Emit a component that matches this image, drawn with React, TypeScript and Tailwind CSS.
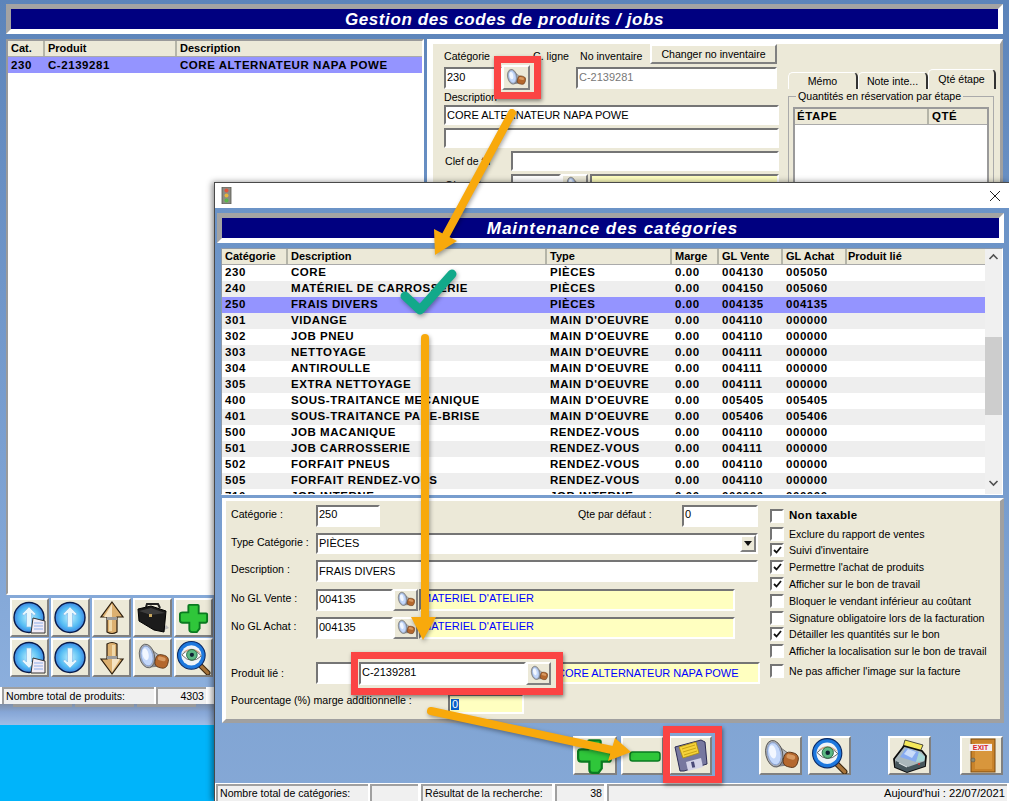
import type { ReactNode } from "react";

const font = "font-['Liberation_Sans',Arial,sans-serif]";
const sunken = "border-2 border-t-[#757575] border-l-[#757575] border-b-white border-r-white";
const raised = "border-2 border-t-white border-l-white border-b-[#808080] border-r-[#808080] bg-[#ece9d8]";
const gridText = "font-bold tracking-[0.55px] text-[11.5px] text-black";
const headText = "font-bold text-[11px] text-black leading-none";

const categories = [
  ["230", "CORE", "PIÈCES", "0.00", "004130", "005050"],
  ["240", "MATÉRIEL DE CARROSSERIE", "PIÈCES", "0.00", "004150", "005060"],
  ["250", "FRAIS DIVERS", "PIÈCES", "0.00", "004135", "004135"],
  ["301", "VIDANGE", "MAIN D'OEUVRE", "0.00", "004110", "000000"],
  ["302", "JOB PNEU", "MAIN D'OEUVRE", "0.00", "004110", "000000"],
  ["303", "NETTOYAGE", "MAIN D'OEUVRE", "0.00", "004111", "000000"],
  ["304", "ANTIROULLE", "MAIN D'OEUVRE", "0.00", "004111", "000000"],
  ["305", "EXTRA NETTOYAGE", "MAIN D'OEUVRE", "0.00", "004111", "000000"],
  ["400", "SOUS-TRAITANCE MECANIQUE", "MAIN D'OEUVRE", "0.00", "005405", "005405"],
  ["401", "SOUS-TRAITANCE PARE-BRISE", "MAIN D'OEUVRE", "0.00", "005406", "005406"],
  ["500", "JOB MACANIQUE", "RENDEZ-VOUS", "0.00", "004110", "000000"],
  ["501", "JOB CARROSSERIE", "RENDEZ-VOUS", "0.00", "004111", "000000"],
  ["502", "FORFAIT PNEUS", "RENDEZ-VOUS", "0.00", "004110", "000000"],
  ["505", "FORFAIT RENDEZ-VOUS", "RENDEZ-VOUS", "0.00", "004110", "000000"],
  ["710", "JOB INTERNE", "JOB INTERNE", "0.00", "000000", "000000"],
];

const options = [
  { label: "Non taxable", checked: false, bold: true, gap: "mt-0" },
  { label: "Exclure du rapport de ventes", checked: false, gap: "mt-[4px]" },
  { label: "Suivi d'inventaire", checked: true, gap: "mt-[2px]" },
  { label: "Permettre l'achat de produits", checked: true, gap: "mt-[3px]" },
  { label: "Afficher sur le bon de travail", checked: true, gap: "mt-[3px]" },
  { label: "Bloquer le vendant inférieur au coûtant", checked: false, gap: "mt-[3px]" },
  { label: "Signature obligatoire lors de la facturation", checked: false, gap: "mt-[3px]" },
  { label: "Détailler les quantités sur le bon", checked: true, gap: "mt-[2px]" },
  { label: "Afficher la localisation sur le bon de travail", checked: false, gap: "mt-[3px]" },
  { label: "Ne pas afficher l'image sur la facture", checked: false, gap: "mt-[6px]" },
];

function SpyIcon({ size = 24 }: { size?: number }) {
  return (
    <svg width={size} height={size} viewBox="0 0 32 32">
      <path d="M12 6 L23 14 L23 24 L13 25 Z" fill="#b4b8c0" stroke="#666" strokeWidth="0.8" />
      <path d="M14 19 L23 17 L23 24 L13 25 Z" fill="#868a94" />
      <g transform="rotate(14 25 20)">
        <rect x="18" y="13" width="13" height="13" rx="5" fill="#b4682e" stroke="#5a3416" strokeWidth="0.8" />
        <rect x="20" y="15" width="8" height="4" rx="2" fill="#d89a62" />
      </g>
      <g transform="rotate(-12 10 14)">
        <ellipse cx="10" cy="14" rx="7.5" ry="12" fill="#a8acb4" stroke="#555" strokeWidth="0.8" />
        <ellipse cx="10" cy="14" rx="5.8" ry="10" fill="#c4d8fa" stroke="#7a98d0" strokeWidth="0.6" />
        <ellipse cx="9" cy="12" rx="3" ry="6" fill="#f2f7ff" />
      </g>
    </svg>
  );
}

function EyeIcon({ size = 36 }: { size?: number }) {
  return (
    <svg width={size} height={size} viewBox="0 0 32 32">
      <path d="M21 22 L29 30" stroke="#3d2a12" strokeWidth="5" strokeLinecap="round" />
      <path d="M21 22 L29 30" stroke="#a8743a" strokeWidth="3" strokeLinecap="round" />
      <circle cx="13.5" cy="13.5" r="13" fill="#1d78de" stroke="#0b2a66" strokeWidth="1" />
      <circle cx="13.5" cy="13.5" r="9.5" fill="#eef3f8" />
      <path d="M4.5 13 Q13.5 3 23 14 Q13.5 23 4.5 13 Z" fill="#fff" stroke="#555" strokeWidth="0.8" />
      <path d="M5 11 Q14 3 23 12 Q14 7 5 11 Z" fill="#d6a98b" />
      <circle cx="14" cy="13" r="5" fill="#5cb884" stroke="#1d5f3a" strokeWidth="0.8" />
      <circle cx="14" cy="13" r="2" fill="#123" />
    </svg>
  );
}

function PlusIcon({ size = 36 }: { size?: number }) {
  return (
    <svg width={size} height={size} viewBox="0 0 32 32">
      <path d="M11 2 h9 q1 0 1 1 v8 h8 q1 0 1 1 v7 q0 2 -2 2 h-6 v6 l-3 4 h-5 q-3 0 -3 -3 v-7 h-7 q-3 0 -3 -3 v-6 q0 -2 3 -2 h6 v-7 q0 -1 1 -1 z" fill="#2fc63a" stroke="#0a7a20" strokeWidth="2" />
    </svg>
  );
}

function MinusIcon() {
  return (
    <svg width="36" height="36" viewBox="0 0 36 36">
      <rect x="5" y="14" width="30" height="9" rx="2.5" fill="#2fc63a" stroke="#0a7a20" strokeWidth="1.5" />
    </svg>
  );
}

function CaseIcon() {
  return (
    <svg width="34" height="34" viewBox="0 0 34 34">
      <path d="M26 30 L33 27 L30 24 Z" fill="#bbb" />
      <path d="M10 6 l1 -3 h11 l2 4" fill="none" stroke="#222" strokeWidth="2" />
      <path d="M2 8 L15 5 L30 10 L28 31 L18 29 L3 20 Z" fill="#1b1b1b" stroke="#000" />
      <path d="M3 10 L15 7 L29 12 L15 14 Z" fill="#3c3c3c" />
      <rect x="13" y="13" width="3" height="3" fill="#c8a860" />
    </svg>
  );
}

function RoundArrowIcon({ down, paper }: { down?: boolean; paper?: boolean }) {
  return (
    <svg width="34" height="34" viewBox="0 0 34 34">
      <defs>
        <radialGradient id="roundBlue" cx="50%" cy="50%" r="60%">
          <stop offset="0%" stopColor="#bff0fc" />
          <stop offset="55%" stopColor="#55bdf4" />
          <stop offset="100%" stopColor="#3066d8" />
        </radialGradient>
      </defs>
      <ellipse cx="16" cy="16.5" rx="15" ry="15" fill="url(#roundBlue)" stroke="#081a4a" strokeWidth="1.4" />
      <g transform={down ? "rotate(180 16 16.5)" : undefined}>
        <path d="M16 6 L23 13 L21 14.5 L18.5 12 L18.5 26 L13.5 26 L13.5 12 L11 14.5 L9 13 Z" fill="#e8f7fd" stroke="#7db4e8" strokeWidth="0.6" />
      </g>
      {paper && (
        <g>
          <path d="M20 17 L32 20 L32 32 L18 32 Z" fill="#f2ecf6" stroke="#333" strokeWidth="1" />
          <path d="M21 22 h9 M21 25 h9 M21 28 h9" stroke="#8db0e8" strokeWidth="1" />
        </g>
      )}
    </svg>
  );
}

function TanArrowIcon({ down }: { down?: boolean }) {
  return (
    <svg width="30" height="34" viewBox="0 0 30 34">
      <g transform={down ? "rotate(180 15 17)" : undefined}>
        <path d="M15 1 L26 16 L20 16 L20 31 Q15 34 10 31 L10 16 L4 16 Z" fill="#dcb070" stroke="#2a1c0c" strokeWidth="1.2" />
        <path d="M15 3 L15 16 L7 16 Z" fill="#f5e3c2" />
        <rect x="10" y="16" width="10" height="3" fill="#9a9a9a" />
        <rect x="12" y="19" width="3" height="11" fill="#f0d8a8" />
      </g>
    </svg>
  );
}

function FloppyIcon() {
  return (
    <svg width="36" height="36" viewBox="0 0 36 36">
      <path d="M2 9 L28 2 L32 4 L34 26 L11 33 L7 33 Z" fill="#77789f" stroke="#2c2c55" strokeWidth="1" />
      <path d="M6 9 L23 4 L26 15 L10 20 Z" fill="#f5d23a" stroke="#a88a10" strokeWidth="0.8" />
      <path d="M9 11 L22 7 M10 14 L23 10 M11 17 L24 13" stroke="#c9a414" strokeWidth="1" />
      <path d="M13 24 L28 20 L30 29 L15 33 Z" fill="#d4d4e8" />
      <rect x="18" y="24" width="3" height="6" fill="#4a4a78" transform="rotate(-12 18 24)" />
    </svg>
  );
}

function PrinterIcon() {
  return (
    <svg width="36" height="34" viewBox="0 0 36 34">
      <path d="M13 1 L31 6 L28 13 L11 8 Z" fill="#f5e85a" stroke="#222" strokeWidth="0.8" />
      <path d="M2 20 L12 7 L30 12 L34 17 L33 27 L15 33 L3 28 Z" fill="#aab8bc" stroke="#0c0c0c" strokeWidth="1.8" />
      <path d="M8 18 L14 9 L27 13 L24 23 Z" fill="#86aaf0" />
      <path d="M12 15 L16 10 L24 13 L20 19 Z" fill="#c9dcfa" />
      <path d="M24 23 L27 13 L33 18 L32 22 Z" fill="#a4d6d6" />
      <path d="M4 22 L16 28 L33 22 L33 27 L15 33 L3 28 Z" fill="#46565c" />
      <path d="M7 24 L15 28" stroke="#dfe6e8" strokeWidth="1.2" />
      <circle cx="27" cy="25" r="1" fill="#e03030" />
    </svg>
  );
}

function ExitIcon() {
  return (
    <svg width="30" height="36" viewBox="0 0 30 36">
      <rect x="4" y="1" width="24" height="33" fill="#c9832a" stroke="#7a4a10" strokeWidth="1" />
      <rect x="8" y="5" width="17" height="26" fill="#d8963c" />
      <rect x="2" y="6" width="23" height="7" fill="#f3eef0" />
      <text x="13.5" y="12" textAnchor="middle" fontSize="7" fontWeight="700" fill="#d8222a" fontFamily="Liberation Sans">EXIT</text>
      <circle cx="6" cy="22" r="2" fill="#8a8a70" stroke="#555" strokeWidth="0.6" />
    </svg>
  );
}

function TrafficLight() {
  return (
    <svg width="11" height="17" viewBox="0 0 11 17">
      <rect x="1" y="0" width="9" height="17" fill="#8c8c84" stroke="#55554f" strokeWidth="0.8" />
      <circle cx="5.5" cy="3.5" r="2" fill="#e2543c" />
      <circle cx="5.5" cy="8.5" r="2" fill="#e8b43c" />
      <circle cx="5.5" cy="13.5" r="2" fill="#58b848" />
    </svg>
  );
}

function Field({ w, h = "h-[22px]", tone = "bg-white", text = "text-black", align = "", children }: { w: string; h?: string; tone?: string; text?: string; align?: string; children?: ReactNode }) {
  return (
    <div className={`${w} ${h} ${tone} ${text} ${sunken} shrink-0 overflow-hidden whitespace-nowrap flex items-center pl-[1px] text-[11px] leading-none ${align}`}>
      {children}
    </div>
  );
}

function SearchButton({ w = "w-[25px]", h = "h-[22px]", size = 18, className = "" }: { w?: string; h?: string; size?: number; className?: string }) {
  return (
    <button className={`${w} ${h} ${raised} shrink-0 flex items-center justify-center ${className}`}>
      <SpyIcon size={size} />
    </button>
  );
}

function ToolButton({ children, w = "w-[41px]", h = "h-[39px]", className = "" }: { children: ReactNode; w?: string; h?: string; className?: string }) {
  return <button className={`${w} ${h} ${raised} shrink-0 flex items-center justify-center ${className}`}>{children}</button>;
}

function TitleBar({ title, className, spacing = "tracking-[0.6px]" }: { title: string; className: string; spacing?: string }) {
  return (
    <div className={`h-[30px] border-[5px] border-t-[#a3a3a3] border-l-[#a3a3a3] border-b-white border-r-white bg-[#000080] flex items-center justify-center ${className}`}>
      <h1 className={`text-white font-bold italic text-[17px] leading-none ${spacing}`}>{title}</h1>
    </div>
  );
}

function StatusCell({ w, children, right, className = "" }: { w: string; children?: ReactNode; right?: boolean; className?: string }) {
  return (
    <div className={`${w} h-full shrink-0 bg-[#f0f0f0] border-l-2 border-t-2 border-l-[#a0a0a0] border-t-[#a0a0a0] flex items-center whitespace-nowrap text-[10.6px] px-[2px] ${right ? "justify-end" : ""} ${className}`}>
      {children}
    </div>
  );
}

function Label({ className = "", children }: { className?: string; children: ReactNode }) {
  return <span className={`text-[10.6px] leading-none whitespace-nowrap text-black ${className}`}>{children}</span>;
}

function ProductsWindow() {
  return (
    <div className="absolute left-0 top-0 w-[1009px] h-[712px] flex flex-col bg-gradient-to-b from-[#5c84ba] to-[#8db0de] pt-[4px]">
      <TitleBar title="Gestion des codes de produits / jobs" className="mx-[6px] shrink-0" />
      <div className="flex flex-1 min-h-0 mt-[5px] pl-[6px] pr-[6px]">
        <div className="w-[418px] shrink-0 flex flex-col">
          <div className="h-[556px] bg-white border-2 border-[#9a9a9a] border-b-white border-r-white shrink-0">
            <div className={`h-[16px] flex bg-[#ece9d8] border-b border-[#aaa] ${headText} text-[11.3px]`}>
              <div className="w-[37px] pl-[3px] flex items-center border-r-2 border-[#b5b5a8]">Cat.</div>
              <div className="w-[132px] pl-[3px] flex items-center border-r-2 border-[#b5b5a8]">Produit</div>
              <div className="flex-1 pl-[3px] flex items-center">Description</div>
            </div>
            <div className={`h-[16px] flex items-center pt-[1px] bg-[#9494ff] ${gridText}`}>
              <div className="w-[37px] pl-[3px]">230</div>
              <div className="w-[132px] pl-[3px]">C-2139281</div>
              <div className="pl-[3px]">CORE ALTERNATEUR NAPA POWE</div>
            </div>
          </div>
          <div className="grid grid-cols-[repeat(5,39px)] gap-x-[2px] gap-y-[1px] mt-[3px] ml-[4px]">
            <ToolButton w="w-[39px]"><RoundArrowIcon paper /></ToolButton>
            <ToolButton w="w-[39px]"><RoundArrowIcon /></ToolButton>
            <ToolButton w="w-[39px]"><TanArrowIcon /></ToolButton>
            <ToolButton w="w-[39px]"><CaseIcon /></ToolButton>
            <ToolButton w="w-[39px]"><PlusIcon size={30} /></ToolButton>
            <ToolButton w="w-[39px]"><RoundArrowIcon down paper /></ToolButton>
            <ToolButton w="w-[39px]"><RoundArrowIcon down /></ToolButton>
            <ToolButton w="w-[39px]"><TanArrowIcon down /></ToolButton>
            <ToolButton w="w-[39px]"><SpyIcon size={32} /></ToolButton>
            <ToolButton w="w-[39px]"><EyeIcon size={34} /></ToolButton>
          </div>
        </div>
        <div className="flex-1 min-w-0 ml-[3px] h-full bg-[#ece9d8] border-t-[5px] border-l-[6px] border-t-white border-l-white border-r-[3px] border-r-[#a0a0a0] flex">
          <div className="w-[354px] shrink-0 pl-[11px]">
            <div className="flex items-end h-[20px]">
              <Label className="w-[89px] pb-[2px]">Catégorie</Label>
              <Label className="w-[47px] pb-[2px]">C. ligne</Label>
              <Label className="w-[70px] pb-[2px]">No inventaire</Label>
              <button className={`w-[127px] h-[20px] ${raised} text-[10.6px] leading-none`}>Changer no inventaire</button>
            </div>
            <div className="flex mt-[1px] items-center">
              <Field w="w-[58px]" align="items-start pt-[3px]">230</Field>
              <SearchButton w="w-[28px]" h="h-[25px]" size={20} />
              <div className="w-[46px]" />
              <Field w="w-[201px]" text="text-[#777]" align="items-start pt-[3px]">C-2139281</Field>
            </div>
            <Label className="block mt-[2px] h-[13px]">Description</Label>
            <Field w="w-[335px]" h="h-[20px]">CORE ALTERNATEUR NAPA POWE</Field>
            <Field w="w-[335px] mt-[3px]" h="h-[20px]" />
            <div className="flex items-center mt-[3px]">
              <Label className="w-[67px] pl-[1px]">Clef de tri</Label>
              <Field w="w-[268px]" h="h-[20px]" />
            </div>
            <div className="flex items-center mt-[3px]">
              <Label className="w-[67px] pl-[1px]">GL vente</Label>
              <Field w="w-[50px]" />
              <SearchButton w="w-[27px]" />
              <Field w="w-[189px] ml-[2px]" tone="bg-[#ffffc0]" />
            </div>
          </div>
          <div className="flex-1 min-w-0 pl-[1px] pt-[25px]">
            <div className="flex items-end h-[20px] text-[10.6px] leading-none">
              <div className="w-[70px] h-[17px] flex items-center justify-center border-t border-l border-white border-r-2 border-r-[#333] rounded-t-[5px]">Mémo</div>
              <div className="w-[70px] h-[17px] flex items-center justify-center border-t border-l border-white border-r-2 border-r-[#333] rounded-t-[5px]">Note inte...</div>
              <div className="w-[68px] h-[20px] flex items-center justify-center bg-[#ece9d8] border-t border-l border-white border-r-2 border-r-[#333] rounded-t-[5px]">Qté étape</div>
            </div>
            <div className="relative mt-[7px] w-[206px] h-[200px] border border-[#aaa] pt-[10px] px-[4px]">
              <div className="absolute left-[7px] -top-[6px] bg-[#ece9d8] px-[2px] text-[10.6px] leading-none whitespace-nowrap">Quantités en réservation par étape</div>
              <div className="h-[180px] bg-white border-2 border-[#9a9a9a]">
                <div className={`h-[16px] flex bg-[#ece9d8] border-b border-[#aaa] ${gridText}`}>
                  <div className="w-[134px] pl-[2px] border-r-2 border-[#b5b5a8] flex items-center">ÉTAPE</div>
                  <div className="pl-[3px] flex items-center">QTÉ</div>
                </div>
              </div>
            </div>
          </div>
        </div>
      </div>
      <div className="h-[17px] shrink-0 flex items-stretch bg-white pl-[2px]">
        <StatusCell w="w-[152px]">Nombre total de produits:</StatusCell>
        <div className="w-[2px]" />
        <StatusCell w="w-[50px]" right>4303</StatusCell>
      </div>
      <div className="h-[8px] shrink-0 flex gap-[3px] pl-[13px] bg-gradient-to-b from-[#7f8fa8] to-[#86a6d6]">
        <div className="w-[59px] h-[3px] bg-[#9a9a9a]" />
        <div className="w-[59px] h-[3px] bg-[#9a9a9a]" />
        <div className="w-[59px] h-[3px] bg-[#9a9a9a]" />
      </div>
    </div>
  );
}

function CategoriesGrid() {
  const columns = ["w-[66px]", "w-[259px]", "w-[125px]", "w-[47px]", "w-[64px]", "w-[64px]"];
  const heads = ["Catégorie", "Description", "Type", "Marge", "GL Vente", "GL Achat"];
  return (
    <div className="ml-[6px] mr-[6px] mt-[5px] h-[247px] shrink-0 bg-white border border-[#8f9aa8] border-b-white border-r-white flex overflow-hidden">
      <div className="flex-1 min-w-0 overflow-hidden">
        <div className={`h-[16px] flex bg-[#ece9d8] border-b border-[#aaa] ${headText}`}>
          {heads.map((head, i) => (
            <div key={head} className={`${columns[i]} pl-[3px] flex items-center border-r-2 border-[#b5b5a8] shrink-0`}>{head}</div>
          ))}
          <div className="flex-1 pl-[1px] flex items-center">Produit lié</div>
        </div>
        {categories.map((row, i) => (
          <div key={row[0]} className={`h-[16px] flex items-center ${gridText} ${row[0] === "250" ? "bg-[#9494ff]" : i % 2 ? "bg-[#eeeeee]" : "bg-white"}`}>
            {row.map((cell, j) => (
              <div key={j} className={`${columns[j]} pl-[3px] shrink-0 whitespace-nowrap overflow-hidden`}>{cell}</div>
            ))}
          </div>
        ))}
      </div>
      <div className="w-[17px] shrink-0 bg-[#f0f0f0] flex flex-col items-center pb-[3px]">
        <svg width="17" height="16" viewBox="0 0 17 16"><path d="M4.5 10 L8.5 6 L12.5 10" fill="none" stroke="#505050" strokeWidth="1.6" /></svg>
        <div className="h-[72px]" />
        <div className="w-[17px] h-[78px] bg-[#cdcdcd]" />
        <div className="flex-1" />
        <svg width="17" height="16" viewBox="0 0 17 16"><path d="M4.5 6 L8.5 10 L12.5 6" fill="none" stroke="#505050" strokeWidth="1.6" /></svg>
      </div>
    </div>
  );
}

function CategoryForm() {
  return (
    <div className="ml-[7px] mr-[5px] mt-[3px] h-[225px] shrink-0 bg-[#ece9d8] border-t-[3px] border-l-[4px] border-t-white border-l-white border-b-[4px] border-r-[4px] border-b-[#a0a0a0] border-r-[#a0a0a0] flex">
      <div className="w-[540px] shrink-0 pl-[5px] pt-[4px]">
        <div className="flex items-center">
          <Label className="w-[85px] pb-[3px]">Catégorie :</Label>
          <Field w="w-[64px]" align="pb-[3px]">250</Field>
          <Label className="ml-[198px] w-[104px] pb-[3px]">Qte par défaut :</Label>
          <Field w="w-[76px]" align="pb-[3px]">0</Field>
        </div>
        <div className="flex items-center mt-[6px]">
          <Label className="w-[85px] pb-[3px]">Type Catégorie :</Label>
          <div className={`w-[442px] h-[21px] bg-white ${sunken} flex items-center justify-between pl-[1px] text-[11px] leading-none`}>
            PIÈCES
            <div className={`w-[16px] h-[17px] ${raised} flex items-center justify-center`}>
              <svg width="8" height="5" viewBox="0 0 8 5"><path d="M0 0 H8 L4 5 Z" fill="#111" /></svg>
            </div>
          </div>
        </div>
        <div className="flex items-center mt-[6px]">
          <Label className="w-[85px] pb-[3px]">Description :</Label>
          <Field w="w-[442px]">FRAIS DIVERS</Field>
        </div>
        <div className="flex items-center mt-[7px]">
          <Label className="w-[85px] pb-[3px]">No GL Vente :</Label>
          <Field w="w-[77px]" align="pb-[2px]">004135</Field>
          <SearchButton />
          <Field w="w-[316px] ml-[1px]" tone="bg-[#ffffc0]" text="text-[#0000ff]" align="pb-[3px]">MATERIEL D'ATELIER</Field>
        </div>
        <div className="flex items-center mt-[6px]">
          <Label className="w-[85px] pb-[3px]">No GL Achat :</Label>
          <Field w="w-[77px]" align="pb-[2px]">004135</Field>
          <SearchButton />
          <Field w="w-[316px] ml-[1px]" tone="bg-[#ffffc0]" text="text-[#0000ff]" align="pb-[3px]">MATERIEL D'ATELIER</Field>
        </div>
        <div className="flex items-center mt-[23px]">
          <Label className="w-[85px]">Produit lié :</Label>
          <Field w="w-[209px]" />
          <SearchButton className="ml-[2px]" />
          <Field w="w-[206px] ml-[2px]" tone="bg-[#ffffc0]" text="text-[#0000ff]">CORE ALTERNATEUR NAPA POWE</Field>
        </div>
        <div className="flex items-start mt-[10px]">
          <Label className="w-[217px] mt-[1px]">Pourcentage (%) marge additionnelle :</Label>
          <Field w="w-[76px]" h="h-[20px]" tone="bg-[#ffffc0]"><span className="bg-[#0a5fc8] text-white px-[1px]">0</span></Field>
        </div>
      </div>
      <div className="flex-1 pl-[4px] pt-[8px]">
        {options.map((option) => (
          <div key={option.label} className={`flex items-center h-[14px] ${option.gap}`}>
            <div className={`w-[14px] h-[14px] bg-white ${sunken} shrink-0 flex items-center justify-center`}>
              {option.checked && (
                <svg width="9" height="8" viewBox="0 0 9 8"><path d="M1 4 L3.5 6.5 L8 1" fill="none" stroke="#111" strokeWidth="1.8" /></svg>
              )}
            </div>
            <span className={`ml-[5px] leading-none whitespace-nowrap ${option.bold ? "font-bold text-[11.5px] tracking-[0.3px]" : "text-[10.6px]"}`}>{option.label}</span>
          </div>
        ))}
      </div>
    </div>
  );
}

function CategoriesWindow() {
  return (
    <div className="absolute left-[214px] top-[182px] w-[795px] h-[619px] flex flex-col border-l border-t border-[#4a4a4a] bg-gradient-to-b from-[#6a92c6] to-[#85a8d6] shadow-[-2px_0_6px_rgba(0,0,0,0.45)]">
      <div className="h-[25px] shrink-0 bg-white flex items-center justify-between pl-[6px] pr-[8px]">
        <TrafficLight />
        <svg width="12" height="12" viewBox="0 0 12 12"><path d="M1 1 L11 11 M11 1 L1 11" stroke="#222" strokeWidth="1" /></svg>
      </div>
      <TitleBar title="Maintenance des catégories" className="ml-[2px] mr-[5px] mt-[5px] shrink-0 pl-[4px]" spacing="tracking-[0.95px]" />
      <CategoriesGrid />
      <CategoryForm />
      <div className="flex-1 flex items-start pt-[13px] pl-[358px]">
        <ToolButton w="w-[44px]"><PlusIcon /></ToolButton>
        <ToolButton w="w-[43px]" className="ml-[4px]"><MinusIcon /></ToolButton>
        <ToolButton w="w-[43px]" className="ml-[5px]"><FloppyIcon /></ToolButton>
        <ToolButton w="w-[43px]" className="ml-[47px]"><SpyIcon size={36} /></ToolButton>
        <ToolButton w="w-[43px]" className="ml-[6px]"><EyeIcon /></ToolButton>
        <ToolButton w="w-[43px]" className="ml-[37px]"><PrinterIcon /></ToolButton>
        <ToolButton w="w-[43px]" className="ml-[29px]"><ExitIcon /></ToolButton>
      </div>
      <div className="h-[18px] shrink-0 flex bg-white pl-[1px] pt-[1px]">
        <StatusCell w="w-[152px]">Nombre total de catégories:</StatusCell>
        <StatusCell w="w-[48px]" className="ml-[2px]" />
        <StatusCell w="w-[131px]" className="ml-[3px]">Résultat de la recherche:</StatusCell>
        <StatusCell w="w-[49px]" className="ml-[3px]" right>38</StatusCell>
        <StatusCell w="w-[400px]" className="ml-[3px] text-[11.2px]" right>Aujourd'hui : 22/07/2021</StatusCell>
      </div>
    </div>
  );
}

function Annotations() {
  return (
    <>
      <div className="absolute left-[494px] top-[56px] w-[47px] h-[43px] border-[7px] border-[#fb4444] shadow-[1px_2px_4px_rgba(0,0,0,0.45)]" />
      <div className="absolute left-[351px] top-[652px] w-[212px] h-[43px] border-[7px] border-[#fb4444] bg-[#ece9d8] shadow-[1px_2px_4px_rgba(0,0,0,0.45)] flex items-center pl-[1px]">
        <Field w="w-[167px]" h="h-[23px]" align="pb-[3px]">C-2139281</Field>
        <SearchButton w="w-[25px]" h="h-[23px]" />
      </div>
      <div className="absolute left-[663px] top-[726px] w-[59px] h-[57px] border-[7px] border-[#fb4444] shadow-[1px_2px_4px_rgba(0,0,0,0.45)]" />
      <svg className="absolute left-0 top-0 drop-shadow-[1px_2px_2px_rgba(0,0,0,0.35)]" width="1009" height="801" viewBox="0 0 1009 801">
        <path d="M512 113 L446 235" stroke="#f8a90c" strokeWidth="8" strokeLinecap="round" fill="none" />
        <path d="M435 255 L434 229 L457 241 Z" fill="#f8a90c" />
        <path d="M405 296 L420 310 L452 274" stroke="#12a98a" strokeWidth="9" strokeLinecap="round" strokeLinejoin="round" fill="none" />
        <path d="M425 338 L425 620" stroke="#f8a90c" strokeWidth="8" strokeLinecap="round" fill="none" />
        <path d="M411 617 L436 617 L423 640 Z" fill="#f8a90c" />
        <path d="M431 711 L612 750" stroke="#f8a90c" strokeWidth="8" strokeLinecap="round" fill="none" />
        <path d="M631 752 L615 738 L608 761 Z" fill="#f8a90c" />
      </svg>
    </>
  );
}

export default function App() {
  return (
    <div className={`relative w-[1009px] h-[801px] overflow-hidden bg-[#00b4fa] text-black ${font}`}>
      <div className="absolute left-0 top-[712px] w-full h-[13px] bg-gradient-to-b from-[#86a6d6] to-[#a0bde6]" />
      <ProductsWindow />
      <CategoriesWindow />
      <Annotations />
    </div>
  );
}
